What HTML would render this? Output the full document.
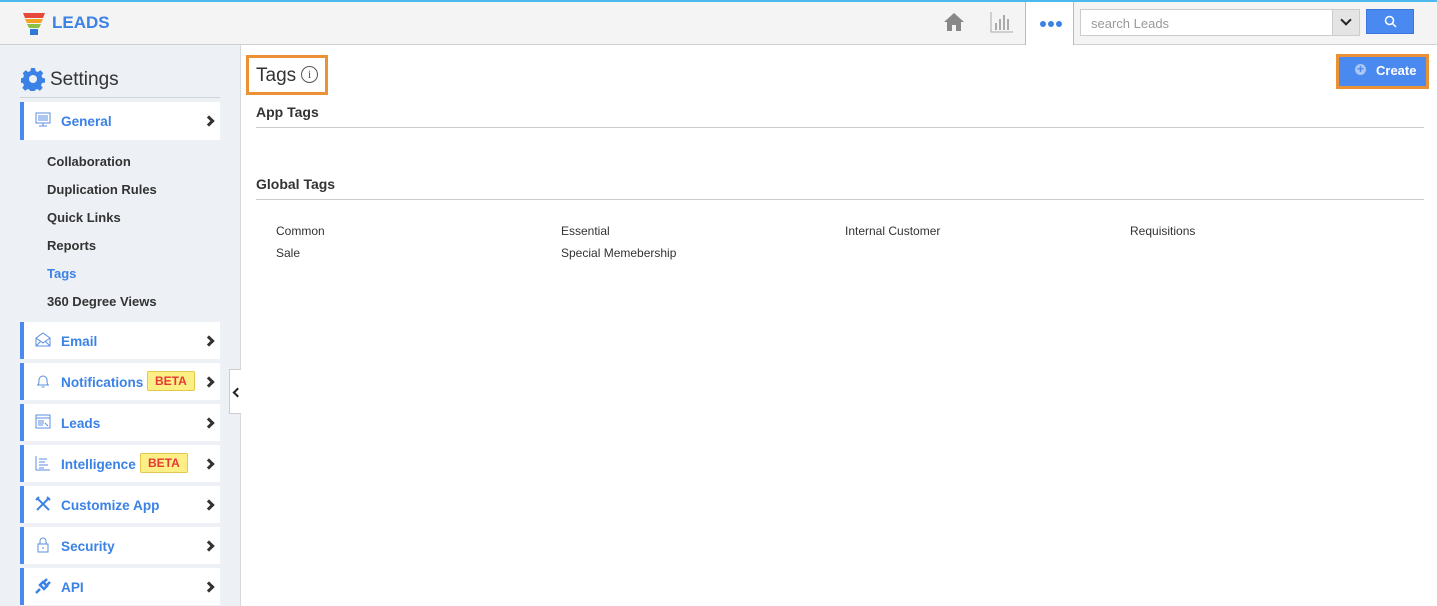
<!DOCTYPE html>
<html><head><style>
*{box-sizing:border-box;margin:0;padding:0}
body{width:1437px;height:606px;overflow:hidden;font-family:"Liberation Sans",Arial,sans-serif;background:#fff;position:relative}
.top{position:absolute;left:0;top:0;width:1437px;height:45px;background:#f4f4f4;border-top:2px solid #4db8ee;border-bottom:1px solid #cfcfcf}
.logo{position:absolute;left:52px;top:11px;font-weight:bold;font-size:17px;color:#3b82e6}
.side{position:absolute;left:0;top:45px;width:241px;height:561px;background:#edf0f4;border-right:1px solid #d5d8dc}
.set{position:absolute;left:50px;top:69px;font-size:19px;color:#333}
.hr{position:absolute;left:20px;top:97px;width:200px;border-top:1px solid #cfd2d6}
.item{position:absolute;left:20px;width:200px;height:37px;background:#fff;border-left:4px solid #4a8af0;font-size:13.6px;color:#3b82e6;font-weight:bold}
.item .t{position:absolute;left:37px;top:12px}
.item .ch{position:absolute;right:7px;top:15px;width:8px;height:8px;border-right:3px solid #333;border-bottom:3px solid #333;transform:rotate(-45deg)}
.item svg{position:absolute;left:11px;top:10px}
.beta{position:absolute;top:8px;background:#fcef86;border:1px solid #e2c94a;border-radius:2px;color:#e53935;font-size:12px;font-weight:bold;padding:2px 7px}
.sub{position:absolute;left:47px;font-size:13px;font-weight:bold;color:#333}
.main{position:absolute;left:256px}
.h{font-size:14px;font-weight:bold;color:#333}
.line{position:absolute;left:256px;width:1168px;border-top:1px solid #ccc}
.tg{position:absolute;font-size:12px;color:#333}
</style></head><body>
<div class="top">
<svg style="position:absolute;left:22px;top:9px" width="24" height="26" viewBox="0 0 24 26"><path d="M1 2h22l-2 5H3z" fill="#e8473c"/><path d="M3 8h18l-2 4H5z" fill="#f3a122"/><path d="M5 13h14l-2 4H7z" fill="#8cc043"/><rect x="8" y="18" width="8" height="6" fill="#2d7ad8"/></svg>
<div class="logo">LEADS</div>
<svg style="position:absolute;left:943px;top:9px" width="22" height="22" viewBox="0 0 22 22"><path d="M11 2L1 11h3v9h5v-6h4v6h5v-9h3z" fill="#888"/></svg>
<svg style="position:absolute;left:990px;top:9px" width="24" height="22" viewBox="0 0 24 22"><path d="M1 1v20h22" stroke="#aaa" fill="none"/><path d="M6 12v7M10 8v11M14 4v15M18 8v11" stroke="#aaa" stroke-width="2"/></svg>
<div style="position:absolute;left:1025px;top:0px;width:49px;height:43px;background:#fff;border-left:1px solid #bbb;border-right:1px solid #bbb"></div>
<div style="position:absolute;left:1040px;top:19px;width:22px;height:6px;display:flex;gap:2px"><span style="width:6px;height:6px;border-radius:50%;background:#3b82e6"></span><span style="width:6px;height:6px;border-radius:50%;background:#3b82e6"></span><span style="width:6px;height:6px;border-radius:50%;background:#3b82e6"></span></div>
<div style="position:absolute;left:1080px;top:7px;width:280px;height:27px;background:#fff;border:1px solid #ccc;font-size:13px;color:#999;padding:6px 10px">search Leads</div>
<div style="position:absolute;left:1332px;top:8px;width:27px;height:25px;background:#e4e4e4;border-left:1px solid #ccc"><div style="position:absolute;left:9px;top:6px;width:8px;height:8px;border-right:2.5px solid #222;border-bottom:2.5px solid #222;transform:rotate(45deg)"></div></div>
<div style="position:absolute;left:1366px;top:7px;width:48px;height:25px;background:#4a8af0;border:1px solid #3a78e0"><svg style="position:absolute;left:17px;top:5px" width="13" height="13" viewBox="0 0 13 13"><circle cx="5.5" cy="5.5" r="4" stroke="#fff" stroke-width="1.5" fill="none"/><path d="M8.5 8.5l3.5 3.5" stroke="#fff" stroke-width="1.5"/></svg></div>
</div>
<div class="side">
</div>
<svg style="position:absolute;left:21px;top:67px" width="24" height="24" viewBox="0 0 24 24"><path fill="#3b82e6" d="M10 1h4l.6 3 2.2 1 2.6-1.7 2.8 2.8L20.5 8.7l1 2.3 2.5.5v4l-3 .6-1 2.2 1.7 2.6-2.8 2.8-2.6-1.7-2.2 1-.6 3h-4l-.6-3-2.2-1-2.6 1.7-2.8-2.8 1.7-2.6-1-2.2-3-.6v-4l3-.6 1-2.2L1.8 6.1 4.6 3.3l2.6 1.7 2.2-1z"/><circle cx="12" cy="12" r="4" fill="#edf0f4"/></svg>
<div class="set">Settings</div>
<div class="hr"></div>
<div class="item" style="top:102px;height:38px"><svg width="16" height="16" viewBox="0 0 16 16"><rect x="1" y="1" width="14" height="10" stroke="#5b8fe0" fill="none"/><path d="M3 4h10M3 6h10M3 8h10M8 11v3M4 14h8" stroke="#5b8fe0"/></svg><span class="t">General</span><span class="ch"></span></div>
<div class="sub" style="top:154px">Collaboration</div>
<div class="sub" style="top:182px">Duplication Rules</div>
<div class="sub" style="top:210px">Quick Links</div>
<div class="sub" style="top:238px">Reports</div>
<div class="sub" style="top:266px;color:#3b82e6">Tags</div>
<div class="sub" style="top:294px">360 Degree Views</div>
<div class="item" style="top:322px"><svg width="16" height="16" viewBox="0 0 16 16"><path d="M1 6l7-5 7 5v8H1zM1 6l7 5 7-5M1 14l5-5M15 14l-5-5" stroke="#5b8fe0" fill="none"/></svg><span class="t">Email</span><span class="ch"></span></div>
<div class="item" style="top:363px"><svg width="16" height="16" viewBox="0 0 16 16"><path d="M3 12c1-1 1-3 1-5a4 4 0 018 0c0 2 0 4 1 5zM2 12h12M6.5 14h3" stroke="#5b8fe0" fill="none"/></svg><span class="t">Notifications</span><span class="beta" style="left:123px">BETA</span><span class="ch"></span></div>
<div class="item" style="top:404px"><svg width="16" height="16" viewBox="0 0 16 16"><rect x="1" y="1" width="14" height="13" stroke="#5b8fe0" fill="none"/><path d="M1 4h14M3 7h6M3 9h6M3 11h5M10 9l3 3" stroke="#5b8fe0"/></svg><span class="t">Leads</span><span class="ch"></span></div>
<div class="item" style="top:445px"><svg width="16" height="16" viewBox="0 0 16 16"><path d="M1 1v14h14M4 4h8M4 7h6M4 10h9M4 13h5" stroke="#5b8fe0" fill="none"/></svg><span class="t">Intelligence</span><span class="beta" style="left:116px">BETA</span><span class="ch"></span></div>
<div class="item" style="top:486px"><svg width="16" height="16" viewBox="0 0 16 16"><path d="M2 2l12 12M14 2L2 14M1 4l3-3M12 1l3 3" stroke="#3b82e6" stroke-width="2" fill="none"/></svg><span class="t">Customize App</span><span class="ch"></span></div>
<div class="item" style="top:527px"><svg width="16" height="16" viewBox="0 0 16 16"><rect x="3" y="7" width="10" height="8" stroke="#5b8fe0" fill="none"/><path d="M5 7V4a3 3 0 016 0v3M8 10v2" stroke="#5b8fe0" fill="none"/></svg><span class="t">Security</span><span class="ch"></span></div>
<div class="item" style="top:568px"><svg width="16" height="16" viewBox="0 0 16 16"><path d="M1 15l4-4M5 7l4 4 3-3-4-4zM9 4l3-3M12 7l3-3" stroke="#3b82e6" stroke-width="2.5" fill="none"/></svg><span class="t">API</span><span class="ch"></span></div>
<div style="position:absolute;left:229px;top:369px;width:12px;height:45px;background:#fff;border:1px solid #ccc;border-right:none"><div style="position:absolute;left:4px;top:19px;width:7px;height:7px;border-left:2.5px solid #222;border-bottom:2.5px solid #222;transform:rotate(45deg)"></div></div>
<div style="position:absolute;left:246px;top:55px;width:82px;height:40px;border:3px solid #ec9236"></div>
<div style="position:absolute;left:256px;top:65px;font-size:19px;color:#333">Tags</div>
<div style="position:absolute;left:301px;top:66px;width:17px;height:17px;border:1.3px solid #555;border-radius:50%;font-size:12px;color:#555;text-align:center;line-height:15px;font-family:'Liberation Serif',serif">i</div>
<div style="position:absolute;left:1336px;top:54px;width:93px;height:35px;border:3px solid #ec9236;background:#4a8af0"></div>
<div style="position:absolute;left:1355px;top:64px;width:11px;height:11px;border-radius:50%;background:#a9c6f5;color:#4a8af0;font-size:12px;font-weight:bold;text-align:center;line-height:11px">+</div>
<div style="position:absolute;left:1376px;top:63px;font-size:13px;font-weight:bold;color:#fff">Create</div>
<div class="main h" style="top:104px">App Tags</div>
<div class="line" style="top:127px"></div>
<div class="main h" style="top:176px">Global Tags</div>
<div class="line" style="top:199px"></div>
<div class="tg" style="left:276px;top:224px">Common</div>
<div class="tg" style="left:561px;top:224px">Essential</div>
<div class="tg" style="left:845px;top:224px">Internal Customer</div>
<div class="tg" style="left:1130px;top:224px">Requisitions</div>
<div class="tg" style="left:276px;top:246px">Sale</div>
<div class="tg" style="left:561px;top:246px">Special Memebership</div>
</body></html>
